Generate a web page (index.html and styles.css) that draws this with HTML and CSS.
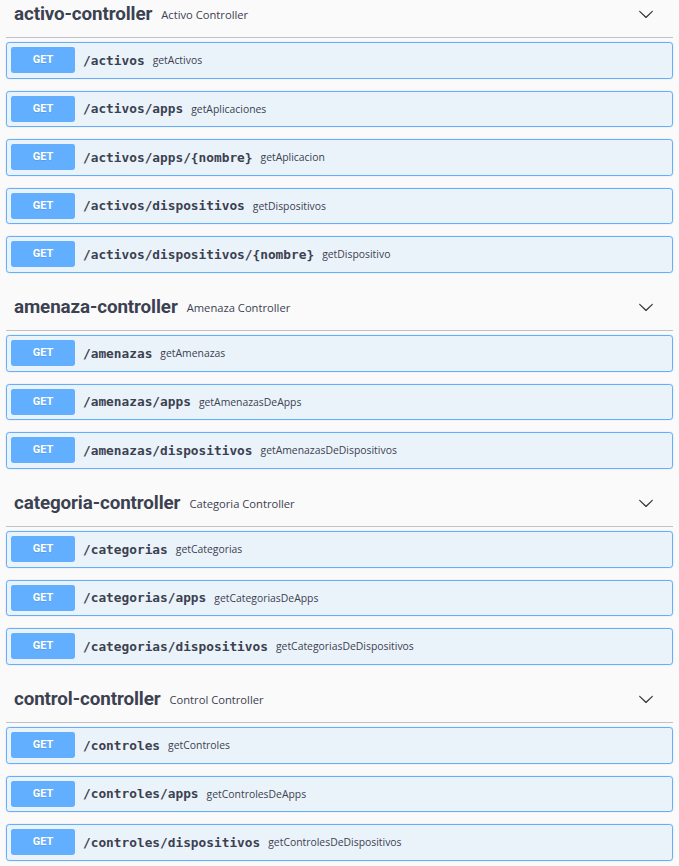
FILE: index.html
```html
<!DOCTYPE html>
<html lang="es">
<head>
<meta charset="utf-8">
<title>Swagger UI</title>
<link rel="stylesheet" href="styles.css">
</head>
<body>
<div class="wrapper">

  <section class="tag-section">
    <div class="tag">
      <h4 class="tag-title">activo-controller</h4>
      <small class="tag-desc">Activo Controller</small>
      <span class="tag-arrow"><svg viewBox="0 0 20 20" width="16" height="16"><path d="M17.418 6.109c.272-.268.709-.268.979 0s.27.701 0 .969l-7.908 7.83c-.27.268-.707.268-.979 0l-7.908-7.83c-.27-.268-.27-.701 0-.969.271-.268.709-.268.979 0L10 13.25l7.418-7.141z"/></svg></span>
    </div>
    <div class="ops">
      <div class="op"><span class="method">GET</span><span class="path">/activos</span><span class="desc">getActivos</span></div>
      <div class="op"><span class="method">GET</span><span class="path">/activos/apps</span><span class="desc">getAplicaciones</span></div>
      <div class="op"><span class="method">GET</span><span class="path">/activos/apps/{nombre}</span><span class="desc">getAplicacion</span></div>
      <div class="op"><span class="method">GET</span><span class="path">/activos/dispositivos</span><span class="desc">getDispositivos</span></div>
      <div class="op"><span class="method">GET</span><span class="path">/activos/dispositivos/{nombre}</span><span class="desc">getDispositivo</span></div>
    </div>
  </section>

  <section class="tag-section">
    <div class="tag">
      <h4 class="tag-title">amenaza-controller</h4>
      <small class="tag-desc">Amenaza Controller</small>
      <span class="tag-arrow"><svg viewBox="0 0 20 20" width="16" height="16"><path d="M17.418 6.109c.272-.268.709-.268.979 0s.27.701 0 .969l-7.908 7.83c-.27.268-.707.268-.979 0l-7.908-7.83c-.27-.268-.27-.701 0-.969.271-.268.709-.268.979 0L10 13.25l7.418-7.141z"/></svg></span>
    </div>
    <div class="ops">
      <div class="op"><span class="method">GET</span><span class="path">/amenazas</span><span class="desc">getAmenazas</span></div>
      <div class="op"><span class="method">GET</span><span class="path">/amenazas/apps</span><span class="desc">getAmenazasDeApps</span></div>
      <div class="op"><span class="method">GET</span><span class="path">/amenazas/dispositivos</span><span class="desc">getAmenazasDeDispositivos</span></div>
    </div>
  </section>

  <section class="tag-section">
    <div class="tag">
      <h4 class="tag-title">categoria-controller</h4>
      <small class="tag-desc">Categoria Controller</small>
      <span class="tag-arrow"><svg viewBox="0 0 20 20" width="16" height="16"><path d="M17.418 6.109c.272-.268.709-.268.979 0s.27.701 0 .969l-7.908 7.83c-.27.268-.707.268-.979 0l-7.908-7.83c-.27-.268-.27-.701 0-.969.271-.268.709-.268.979 0L10 13.25l7.418-7.141z"/></svg></span>
    </div>
    <div class="ops">
      <div class="op"><span class="method">GET</span><span class="path">/categorias</span><span class="desc">getCategorias</span></div>
      <div class="op"><span class="method">GET</span><span class="path">/categorias/apps</span><span class="desc">getCategoriasDeApps</span></div>
      <div class="op"><span class="method">GET</span><span class="path">/categorias/dispositivos</span><span class="desc">getCategoriasDeDispositivos</span></div>
    </div>
  </section>

  <section class="tag-section">
    <div class="tag">
      <h4 class="tag-title">control-controller</h4>
      <small class="tag-desc">Control Controller</small>
      <span class="tag-arrow"><svg viewBox="0 0 20 20" width="16" height="16"><path d="M17.418 6.109c.272-.268.709-.268.979 0s.27.701 0 .969l-7.908 7.83c-.27.268-.707.268-.979 0l-7.908-7.83c-.27-.268-.27-.701 0-.969.271-.268.709-.268.979 0L10 13.25l7.418-7.141z"/></svg></span>
    </div>
    <div class="ops">
      <div class="op"><span class="method">GET</span><span class="path">/controles</span><span class="desc">getControles</span></div>
      <div class="op"><span class="method">GET</span><span class="path">/controles/apps</span><span class="desc">getControlesDeApps</span></div>
      <div class="op"><span class="method">GET</span><span class="path">/controles/dispositivos</span><span class="desc">getControlesDeDispositivos</span></div>
    </div>
  </section>

</div>
</body>
</html>
```

FILE: styles.css
```css
html, body {
  margin: 0;
  padding: 0;
  background: #fafafa;
  overflow: hidden;
}

body {
  font-family: "Open Sans", "Noto Sans", sans-serif;
  color: #3b4151;
}

.wrapper {
  padding: 0 6px;
  margin-top: -8.5px;
}

.tag {
  display: flex;
  align-items: center;
  height: 46.5px;
  box-sizing: border-box;
  padding: 0 19px 0 8px;
  border-bottom: 1px solid rgba(59, 65, 81, 0.3);
  margin-bottom: 4px;
}

.tag-title {
  margin: 0;
  font-family: Roboto, "Open Sans", sans-serif;
  font-weight: 700;
  font-size: 18.8px;
  color: #3b4151;
  letter-spacing: -0.1px;
}

.tag-desc {
  flex: 1;
  padding-left: 9px;
  font-size: 11.2px;
  color: #3b4151;
}

.tag-arrow {
  display: flex;
  align-items: center;
}

.tag-arrow svg {
  fill: #333;
  display: block;
}

.ops {
  display: flex;
  flex-direction: column;
}

.op {
  display: flex;
  align-items: center;
  box-sizing: border-box;
  height: 36.5px;
  margin-bottom: 12px;
  padding: 0 4px;
  border: 1px solid #61affe;
  border-radius: 3.2px;
  background: #ebf3fa;
  box-shadow: 0 0 2px rgba(0, 0, 0, 0.12);
}

.method {
  min-width: 64px;
  height: 26px;
  line-height: 26px;
  text-align: center;
  background: #61affe;
  color: #fff;
  border-radius: 2.4px;
  font-family: Roboto, "Open Sans", sans-serif;
  font-weight: 700;
  font-size: 11px;
  text-shadow: 0 1px 0 rgba(0, 0, 0, 0.1);
}

.path {
  padding: 0 8px;
  font-family: "DejaVu Sans Mono", "Liberation Mono", monospace;
  font-weight: 700;
  font-size: 12.8px;
  color: #3b4151;
}

.desc {
  font-size: 10.4px;
  color: #3b4151;
}
```
